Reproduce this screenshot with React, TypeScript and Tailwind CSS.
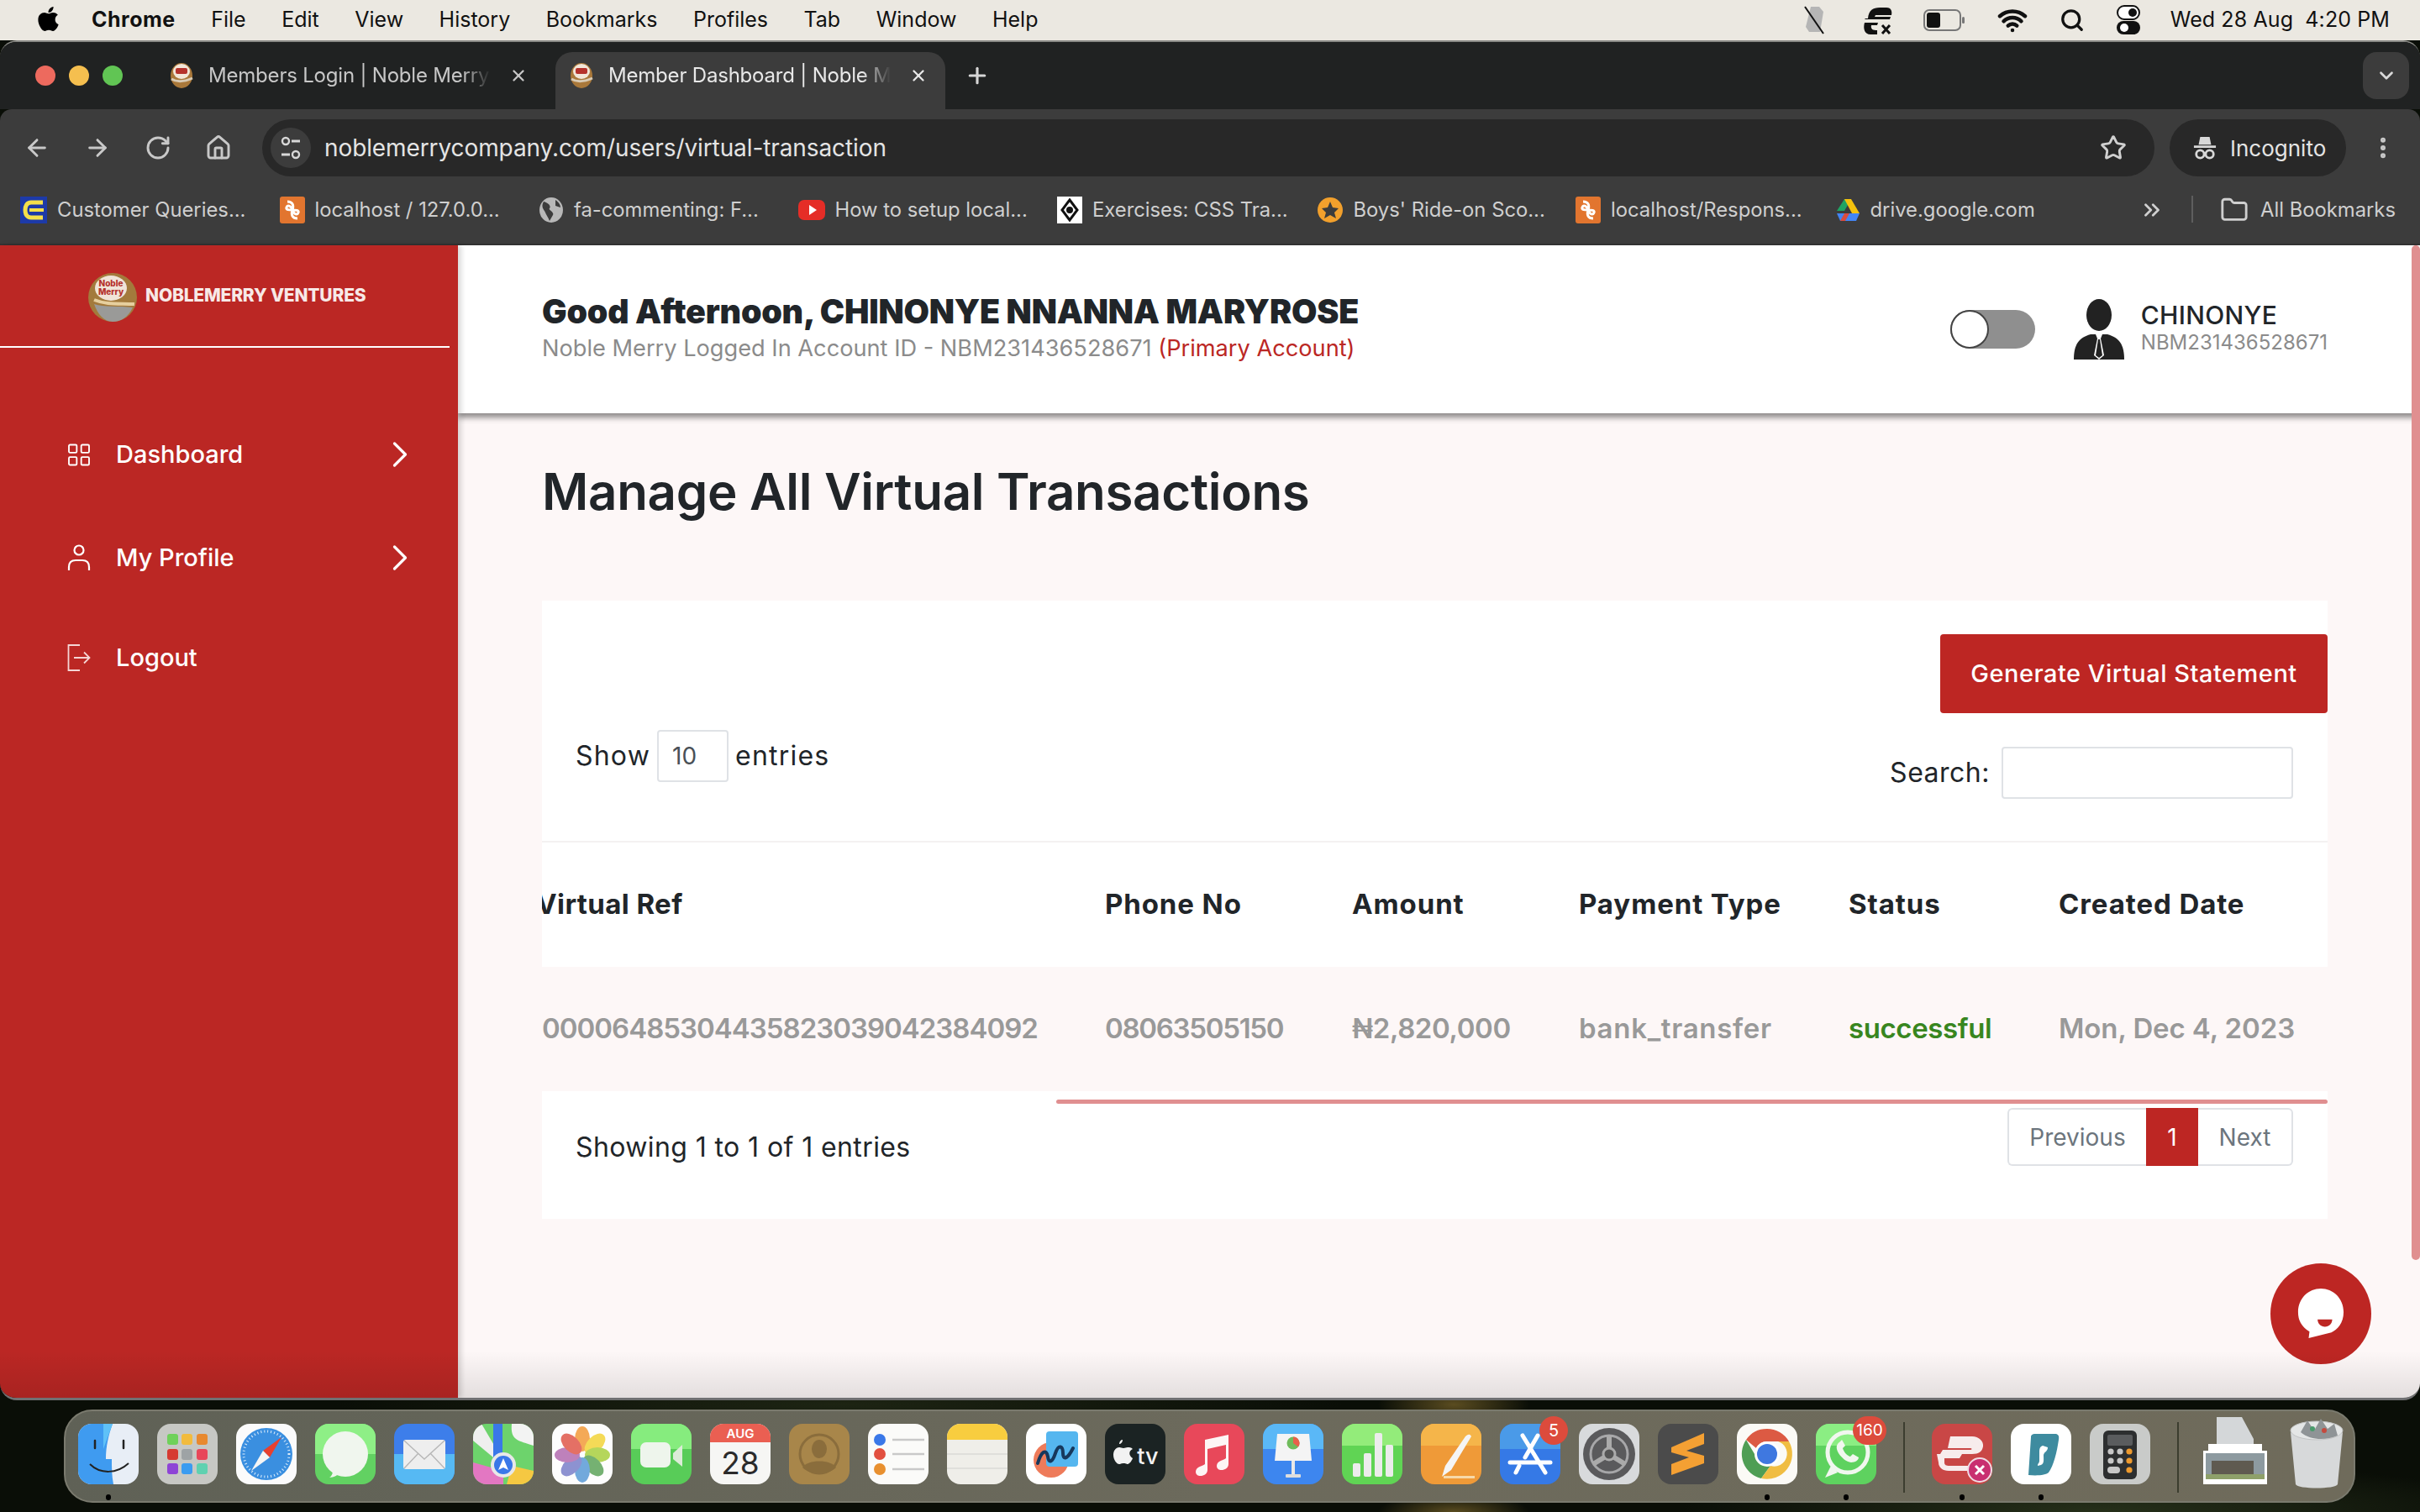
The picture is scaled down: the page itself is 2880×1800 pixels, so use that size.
import { ReactNode, useId } from 'react';
import { FaApple } from 'react-icons/fa';
import {
  ArrowLeft,
  ArrowRight,
  RotateCw,
  Home,
  Star,
  X,
  Plus,
  ChevronDown,
  ChevronRight,
  ChevronsRight,
  EllipsisVertical,
  Folder,
  LayoutGrid,
  Search,
  Wifi,
} from 'lucide-react';

const ui = "font-['Inter',sans-serif]";

const menuItems = ['File', 'Edit', 'View', 'History', 'Bookmarks', 'Profiles', 'Tab', 'Window', 'Help'];

function MenuBar() {
  return (
    <div className="h-[48px] bg-[#ebe8e1] flex items-center justify-between pl-[42px] pr-[36px] text-[25px] text-[#111]">
      <div className="flex items-center gap-[42.5px]">
        <div className="flex items-center gap-[36px]">
          <FaApple className="w-[31px] h-[33px] text-black -mt-[3px]" />
          <span className="font-bold tracking-[0.5px]">Chrome</span>
        </div>
        {menuItems.map((m) => (
          <span key={m}>{m}</span>
        ))}
      </div>
      <div className="flex items-center">
        <svg viewBox="0 0 28 36" className="w-[28px] h-[36px] mr-[44px]">
          <path d="M10 2h10l5 6-4 24H8L4 26z" fill="#b5b5b5" />
          <path d="M3 2l22 32" stroke="#111" strokeWidth="2" />
        </svg>
        <svg viewBox="0 0 36 36" className="w-[36px] h-[36px] mr-[36px]">
          <path d="M6 16C7 6 12 3 20 3h8c6 0 7 5 6 9H15l-1 2h19l-1 3H2l1-1zM2 21h16l-1 3H10c-1 5 2 6 7 6v5H9C2 35 0 28 2 21z" fill="#111" />
          <path d="M23 24l9 10M32 24l-9 10" stroke="#111" strokeWidth="3" />
        </svg>
        <svg viewBox="0 0 50 26" className="w-[50px] h-[26px] mr-[38px]">
          <rect x="1" y="1" width="43" height="24" rx="6" fill="none" stroke="#777" strokeWidth="2" />
          <rect x="4" y="4" width="16" height="18" rx="3" fill="#111" />
          <rect x="46" y="9" width="3" height="8" rx="1.5" fill="#777" />
        </svg>
        <Wifi className="w-[36px] h-[36px] mr-[38px] text-[#111]" strokeWidth={3} />
        <Search className="w-[30px] h-[32px] mr-[38px] text-[#111]" strokeWidth={2.6} />
        <svg viewBox="0 0 28 36" className="w-[28px] h-[36px] mr-[36px]">
          <rect x="1" y="1" width="26" height="16" rx="8" fill="#fff" stroke="#111" strokeWidth="2" />
          <circle cx="19" cy="9" r="5" fill="#111" />
          <rect x="0" y="19" width="28" height="16" rx="8" fill="#111" />
          <circle cx="9" cy="27" r="5" fill="#fff" />
        </svg>
        <span className="whitespace-pre tracking-[0.1px]">Wed 28 Aug  4:20 PM</span>
      </div>
    </div>
  );
}

function NobleFavicon() {
  return (
    <svg viewBox="0 0 28 32" className="w-[28px] h-[32px] shrink-0">
      <ellipse cx="14" cy="16" rx="13" ry="15" fill="#a9783a" />
      <ellipse cx="14" cy="11" rx="10" ry="9" fill="#f2e6d8" />
      <rect x="7" y="7" width="14" height="7" rx="2" fill="#b5322c" />
      <path d="M2 20c5 3 14 4 25-1" stroke="#d9cbb5" strokeWidth="3" fill="none" />
    </svg>
  );
}

function Tab({ title, active }: { title: string; active?: boolean }) {
  return (
    <div
      className={`flex items-center h-[68px] rounded-t-[20px] pl-[17px] pb-[12px] ${
        active ? 'w-[464px] bg-[#3c3c3c] text-[#e8e8e8]' : 'w-[476px] text-[#c7c7c7]'
      }`}
    >
      <NobleFavicon />
      <span className="ml-[18px] w-[336px] text-[24px] tracking-[-0.2px] whitespace-nowrap overflow-hidden [mask-image:linear-gradient(to_right,black_90%,transparent)]">
        {title}
      </span>
      <X className="ml-[22px] w-[22px] h-[22px]" strokeWidth={2.5} />
    </div>
  );
}

function TabStrip() {
  return (
    <div className="h-[80px] bg-[#202222] flex items-end relative">
      <div className="flex items-center gap-[16px] pl-[42px] pr-[39px] h-[80px]">
        <span className="w-[24px] h-[24px] rounded-full bg-[#ed6a5e]" />
        <span className="w-[24px] h-[24px] rounded-full bg-[#f5bf4f]" />
        <span className="w-[24px] h-[24px] rounded-full bg-[#61c554]" />
      </div>
      <Tab title="Members Login | Noble Merry" />
      <Tab title="Member Dashboard | Noble M" active />
      <Plus className="ml-[23px] mb-[25px] w-[30px] h-[30px] text-[#d6d6d6]" strokeWidth={2.5} />
      <div className="absolute right-[13px] top-[12px] w-[55px] h-[56px] bg-[#3c3c3c] rounded-[16px] flex items-center justify-center">
        <ChevronDown className="w-[26px] h-[26px] text-[#d8d8d8]" strokeWidth={2.5} />
      </div>
    </div>
  );
}

function Toolbar() {
  const icon = 'w-[32px] h-[32px] text-[#c8c8c8]';
  return (
    <div className="h-[80px] bg-[#3c3c3c] flex items-center pl-[28px] rounded-t-[14px] pt-[12px]">
      <div className="flex items-center gap-[40px] mr-[36px]">
        <ArrowLeft className={icon} strokeWidth={2.2} />
        <ArrowRight className={icon} strokeWidth={2.2} />
        <RotateCw className={icon} strokeWidth={2.2} />
        <Home className={icon} strokeWidth={2.2} />
      </div>
      <div className="w-[2252px] h-[68px] rounded-full bg-[#282828] flex items-center pl-[10px] pr-[33px]">
        <div className="w-[48px] h-[48px] rounded-full bg-[#3c3c3c] flex items-center justify-center">
          <svg viewBox="0 0 26 34" className="w-[26px] h-[34px]">
            <circle cx="7" cy="9" r="4" fill="none" stroke="#d8d8d8" strokeWidth="2.4" />
            <path d="M14 9h10M2 25h10" stroke="#d8d8d8" strokeWidth="2.8" />
            <circle cx="19" cy="25" r="4" fill="none" stroke="#d8d8d8" strokeWidth="2.4" />
          </svg>
        </div>
        <span className="ml-[16px] text-[28px] text-[#e4e4e4] tracking-[-0.1px]">noblemerrycompany.com/users/virtual-transaction</span>
        <Star className="ml-auto w-[32px] h-[32px] text-[#d0d0d0]" strokeWidth={2.2} />
      </div>
      <div className="ml-[18px] w-[210px] h-[68px] rounded-full bg-[#282828] flex items-center pl-[28px] gap-[16px] text-[26px] text-[#e4e4e4]">
        <svg viewBox="0 0 30 32" className="w-[28px] h-[32px]">
          <path d="M9 2h12l2 10H7z M1 13h28v3H1z" fill="#d8d8d8" />
          <circle cx="9" cy="24" r="5" fill="none" stroke="#d8d8d8" strokeWidth="3" />
          <circle cx="21" cy="24" r="5" fill="none" stroke="#d8d8d8" strokeWidth="3" />
        </svg>
        <span>Incognito</span>
      </div>
      <EllipsisVertical className="ml-[28px] w-[32px] h-[32px] text-[#c8c8c8]" strokeWidth={2.5} />
    </div>
  );
}

function XamppIcon() {
  return (
    <svg viewBox="0 0 30 32" className="w-[30px] h-[32px] shrink-0">
      <rect width="30" height="32" rx="3" fill="#e2752f" />
      <path d="M9 6c6 0 8 4 6 10-2-6-6-6-7-3s3 3 7 3c4 0 8 0 7 3s-5 3-7-3c-2 6 0 10 6 10" stroke="#fff" strokeWidth="3" fill="none" />
    </svg>
  );
}

const bookmarks: { label: string; icon: ReactNode }[] = [
  {
    label: 'Customer Queries...',
    icon: (
      <svg viewBox="0 0 32 32" className="w-[32px] h-[32px] shrink-0">
        <rect width="32" height="32" fill="#1d3aa8" />
        <path d="M27 7H13C8 7 6 11 6 16s2 9 7 9h14" stroke="#f5e04a" strokeWidth="5" fill="none" />
        <rect x="11" y="14" width="17" height="4" fill="#f5e04a" />
      </svg>
    ),
  },
  { label: 'localhost / 127.0.0...', icon: <XamppIcon /> },
  {
    label: 'fa-commenting: F...',
    icon: (
      <svg viewBox="0 0 30 32" className="w-[30px] h-[32px] shrink-0">
        <ellipse cx="15" cy="16" rx="14" ry="15" fill="#b8b8b8" />
        <path d="M6 6c6 2 9 5 7 8-2 2 6 4 4 8l-4 7c-2-5-4-7-5-10S2 13 6 6zM20 4c3 2 6 5 6 9l-6-2z" fill="#3c3c3c" />
      </svg>
    ),
  },
  {
    label: 'How to setup local...',
    icon: (
      <svg viewBox="0 0 32 32" className="w-[32px] h-[32px] shrink-0">
        <rect y="4" width="32" height="24" rx="7" fill="#e52d27" />
        <path d="M13 10l9 6-9 6z" fill="#fff" />
      </svg>
    ),
  },
  {
    label: 'Exercises: CSS Tra...',
    icon: (
      <svg viewBox="0 0 30 32" className="w-[30px] h-[32px] shrink-0">
        <rect width="30" height="32" fill="#fff" />
        <path d="M15 4l9 12-9 12-9-12z" fill="none" stroke="#111" strokeWidth="3" />
        <circle cx="15" cy="16" r="4" fill="#111" />
      </svg>
    ),
  },
  {
    label: "Boys' Ride-on Sco...",
    icon: (
      <svg viewBox="0 0 32 32" className="w-[32px] h-[32px] shrink-0">
        <circle cx="16" cy="16" r="15" fill="#f2a02c" />
        <path d="M16 6l3 7 7 1-5 5 2 7-7-4-7 4 2-7-5-5 7-1z" fill="#3c3c3c" />
      </svg>
    ),
  },
  { label: 'localhost/Respons...', icon: <XamppIcon /> },
  {
    label: 'drive.google.com',
    icon: (
      <svg viewBox="0 0 30 30" className="w-[30px] h-[30px] shrink-0">
        <path d="M11 2h8l-8 14H2z" fill="#1fa463" />
        <path d="M11 2h8l10 17h-9z" fill="#f4c20d" />
        <path d="M7 19h22l-4 9H6l-4-9z" fill="#4285f4" />
        <path d="M6 28l5-9h6l-5 9z" fill="#d94b3d" />
      </svg>
    ),
  },
];

function BookmarksBar() {
  return (
    <div className="h-[82px] bg-[#3c3c3c] flex items-start pt-[23px] pl-[24px] text-[23.8px] text-[#cfcfcf] border-b-[2px] border-[#333]">
      {bookmarks.map((b) => (
        <div key={b.label} className="w-[308.5px] h-[34px] flex items-center gap-[12px] whitespace-nowrap">
          {b.icon}
          <span>{b.label}</span>
        </div>
      ))}
      <ChevronsRight className="ml-[54px] mt-[2px] w-[30px] h-[30px] text-[#cfcfcf]" strokeWidth={2.2} />
      <div className="ml-[32px] w-[2px] h-[32px] bg-[#5e5e5e]" />
      <Folder className="ml-[32px] w-[34px] h-[34px] text-[#cfcfcf]" strokeWidth={2} />
      <span className="ml-[14px] leading-[34px] whitespace-nowrap">All Bookmarks</span>
    </div>
  );
}

function NavItem({ icon, label, arrow, className }: { icon: ReactNode; label: string; arrow?: boolean; className?: string }) {
  return (
    <div className={`flex items-center h-[44px] pl-[78px] pr-[43px] text-[29px] font-medium text-white ${className ?? ''}`}>
      <span className="w-[32px] flex justify-center">{icon}</span>
      <span className="ml-[28px]">{label}</span>
      {arrow && <ChevronRight className="ml-auto w-[52px] h-[52px] -my-[4px]" strokeWidth={1.5} />}
    </div>
  );
}

function Sidebar() {
  return (
    <aside className="w-[545px] shrink-0 bg-[#bb2724] flex flex-col shadow-[4px_0_6px_rgba(0,0,0,0.15)] z-10">
      <div className="w-[535px] h-[122px] border-b-[2px] border-white flex items-start pt-[32px] pl-[104px]">
        <svg viewBox="0 0 60 60" className="w-[60px] h-[60px]">
          <ellipse cx="30" cy="30" rx="29" ry="29" fill="#a37a3c" />
          <ellipse cx="28" cy="19" rx="19" ry="15" fill="#f0e4d8" />
          <text x="28" y="17" textAnchor="middle" fontSize="10" fontWeight="800" fill="#b5322c" fontFamily="Inter, sans-serif">Noble</text>
          <text x="28" y="27" textAnchor="middle" fontSize="10" fontWeight="800" fill="#b5322c" fontFamily="Inter, sans-serif">Merry</text>
          <path d="M8 38c12 4 30 2 46 4-6 12-14 17-24 17-10 0-18-9-22-21z" fill="#9a9a98" />
          <path d="M8 33c15 6 30 4 48 5" stroke="#e6cf9e" strokeWidth="4" fill="none" />
        </svg>
        <span className="ml-[9px] mt-[12px] text-[21px] font-extrabold text-[#f7e9e7] whitespace-nowrap tracking-[-0.2px]">NOBLEMERRY VENTURES</span>
      </div>
      <NavItem
        className="mt-[105px]"
        icon={<LayoutGrid className="w-[37px] h-[37px]" strokeWidth={1.4} />}
        label="Dashboard"
        arrow
      />
      <NavItem
        className="mt-[79px]"
        icon={
          <svg viewBox="0 0 28 32" className="w-[28px] h-[32px]" fill="none" stroke="#fff" strokeWidth="2.2">
            <circle cx="14" cy="7" r="5.5" />
            <path d="M2 31v-4c0-5 3-8 8-8h8c5 0 8 3 8 8v4" />
          </svg>
        }
        label="My Profile"
        arrow
      />
      <NavItem
        className="mt-[75px]"
        icon={
          <svg viewBox="0 0 28 34" className="w-[28px] h-[34px]" fill="none" stroke="#f5d5d4" strokeWidth="1.8">
            <path d="M15 2H1.5v30H15" />
            <path d="M8 17h18M20 10.5l6.5 6.5-6.5 6.5" />
          </svg>
        }
        label="Logout"
      />
    </aside>
  );
}

function TopHeader() {
  return (
    <header className="h-[200px] bg-white flex items-center pl-[100px] pr-[110px] shadow-[0_5px_7px_rgba(0,0,0,0.45)] relative shrink-0">
      <div className="flex flex-col gap-[5px] -mt-[5px]">
        <h1 className="text-[39.3px] leading-[46px] font-black text-[#212529] tracking-[-0.2px] whitespace-nowrap">Good Afternoon, CHINONYE NNANNA MARYROSE</h1>
        <p className="text-[27.2px] leading-[32px] text-[#8b8b8b] whitespace-nowrap">
          Noble Merry Logged In Account ID - NBM231436528671 <span className="text-[#bb2724]">(Primary Account)</span>
        </p>
      </div>
      <div className="ml-auto w-[101px] h-[46px] rounded-full bg-[#8f8f8f] flex items-center">
        <span className="w-[46px] h-[46px] rounded-full bg-white border-[2px] border-[#444]" />
      </div>
      <svg viewBox="0 0 60 72" className="ml-[46px] w-[60px] h-[72px] shrink-0">
        <ellipse cx="30" cy="19" rx="15" ry="19" fill="#222" />
        <path d="M0 72c0-18 6-26 20-30h20c14 4 20 12 20 30z" fill="#222" />
        <path d="M26 42h8l-2 5 4 20-6 5-6-5 4-20z" fill="#fff" />
        <path d="M29 48h2l3 19-4 3-4-3z" fill="#222" />
      </svg>
      <div className="ml-[20px] flex flex-col -mt-[4px]">
        <span className="text-[30px] leading-[36px] font-medium text-[#212529] tracking-[0.3px]">CHINONYE</span>
        <span className="text-[24px] leading-[30px] text-[#8b8b8b] whitespace-nowrap">NBM231436528671</span>
      </div>
    </header>
  );
}

const columns = [
  { title: 'Virtual Ref', value: '00006485304435823039042384092', w: 'w-[670px]', td: 'tracking-[-1px] text-[#999]' },
  { title: 'Phone No', value: '08063505150', w: 'w-[294px]', td: 'tracking-[-1.3px] text-[#999]' },
  { title: 'Amount', value: '₦2,820,000', w: 'w-[270px]', td: 'tracking-[-0.4px] text-[#999]' },
  { title: 'Payment Type', value: 'bank_transfer', w: 'w-[321px]', td: 'tracking-[0.7px] text-[#999]' },
  { title: 'Status', value: 'successful', w: 'w-[250px]', td: 'tracking-[-0.4px] text-[#38861f]' },
  { title: 'Created Date', value: 'Mon, Dec 4, 2023', w: 'w-[320px]', td: 'tracking-[-0.1px] text-[#999]' },
];

function Card() {
  return (
    <section className="mt-[94px] bg-white text-[32px] text-[#212529]">
      <div className="pt-[40px] flex justify-end">
        <button className="w-[461px] h-[94px] rounded-[4px] bg-[#bd2623] text-white text-[29px] font-medium tracking-[0.5px]">Generate Virtual Statement</button>
      </div>
      <div className="mt-[20px] pl-[40px] pr-[41px] pb-[50px] flex justify-between items-start">
        <div className="flex items-center gap-[8px] tracking-[1.2px]">
          <span>Show</span>
          <div className="w-[85px] h-[62px] border-[2px] border-[#dfe2e6] rounded-[4px] flex items-center pl-[16px] text-[28px] text-[#495057] tracking-normal">10</div>
          <span>entries</span>
        </div>
        <div className="mt-[20px] flex items-center gap-[14px] tracking-[0.5px]">
          <span>Search:</span>
          <div className="w-[347px] h-[62px] border-[2px] border-[#dfe2e6] rounded-[4px]" />
        </div>
      </div>
      <div className="overflow-hidden border-t-[2px] border-[#f4f1f1]">
        <table className="table-fixed w-[2125px] text-left">
          <thead>
            <tr className="h-[148px] text-[33px] text-[#212529]">
              {columns.map((c, i) => (
                <th key={c.title} className={`${c.w} font-bold whitespace-nowrap ${i === 0 ? '-indent-[7px] tracking-[0.4px]' : 'tracking-[0.9px]'}`}>
                  {c.title}
                </th>
              ))}
            </tr>
          </thead>
          <tbody>
            <tr className="h-[148px] bg-[#fdf7f7] text-[33px] font-semibold">
              {columns.map((c) => (
                <td key={c.title} className={`whitespace-nowrap ${c.td}`}>
                  {c.value}
                </td>
              ))}
            </tr>
          </tbody>
        </table>
      </div>
      <div className="h-[152px] pt-[10px] flex flex-col">
        <div className="self-end w-[1513px] h-[5px] rounded-full bg-[#e08f90]" />
        <div className="mt-[5px] pl-[40px] pr-[41px] flex justify-between items-start">
          <span className="mt-[27px] leading-[40px] tracking-[0.4px]">Showing 1 to 1 of 1 entries</span>
          <div className="flex h-[69px] text-[28px] text-[#6c757d]">
            <span className="w-[165px] border-[2px] border-r-0 border-[#dfe2e6] rounded-l-[6px] flex items-center justify-center">Previous</span>
            <span className="w-[62px] bg-[#bd2623] text-white flex items-center justify-center">1</span>
            <span className="w-[113px] border-[2px] border-l-0 border-[#dfe2e6] rounded-r-[6px] flex items-center justify-center">Next</span>
          </div>
        </div>
      </div>
    </section>
  );
}

function Squircle({ children, bg }: { children?: ReactNode; bg: string }) {
  const id = useId();
  return (
    <svg viewBox="0 0 72 72" className="w-[72px] h-[72px] block">
      <defs>
        <clipPath id={id}>
          <rect width="72" height="72" rx="16" />
        </clipPath>
      </defs>
      <g clipPath={`url(#${id})`}>
        <rect width="72" height="72" fill={bg} />
        {children}
      </g>
    </svg>
  );
}

const dockLeft: { key: string; bg: string; art: ReactNode; dot?: boolean; badge?: string }[] = [
  {
    key: 'finder',
    bg: '#e8eef6',
    dot: true,
    art: (
      <>
        <path d="M0 0h41c-5 14-8 27-8 42h7c0 11 0 20 2 30H0z" fill="#3f9bf0" />
        <path d="M0 0h41L30 30V0z" fill="#5fc1f8" />
        <path d="M20 20v9M54 20v9" stroke="#222" strokeWidth="2.5" strokeLinecap="round" />
        <path d="M14 48c12 12 32 12 46-1" stroke="#222" strokeWidth="2" fill="none" />
      </>
    ),
  },
  {
    key: 'launchpad',
    bg: '#c7c8c4',
    art: (
      <>
        <rect x="12" y="12" width="13" height="13" rx="3" fill="#6fd15a" />
        <rect x="29" y="12" width="13" height="13" rx="3" fill="#f2bb3d" />
        <rect x="47" y="12" width="13" height="13" rx="3" fill="#e8892f" />
        <rect x="12" y="30" width="13" height="13" rx="3" fill="#d63a32" />
        <rect x="29" y="30" width="13" height="13" rx="3" fill="#9ea3a5" />
        <rect x="47" y="30" width="13" height="13" rx="3" fill="#e8475a" />
        <rect x="12" y="47" width="13" height="13" rx="3" fill="#8e44d6" />
        <rect x="29" y="47" width="13" height="13" rx="3" fill="#3b9cf0" />
        <rect x="47" y="47" width="13" height="13" rx="3" fill="#5fd1b0" />
      </>
    ),
  },
  {
    key: 'safari',
    bg: '#fbfbfb',
    art: (
      <>
        <circle cx="36" cy="36" r="31" fill="#3a8fe0" />
        <circle cx="36" cy="36" r="27" fill="none" stroke="#dfeefb" strokeWidth="3" strokeDasharray="1 3" />
        <path d="M54 16L40 40 32 32z" fill="#e8402f" />
        <path d="M18 56l14-24 8 8z" fill="#f5f5f5" />
      </>
    ),
  },
  {
    key: 'messages',
    bg: '#62d162',
    art: (
      <>
        <rect width="72" height="36" fill="#8eef86" />
        <ellipse cx="36" cy="36" rx="27" ry="27" fill="#f0f6ee" />
        <path d="M20 54c2 4 0 8-3 10 5 0 10-3 13-6z" fill="#f0f6ee" />
      </>
    ),
  },
  {
    key: 'mail',
    bg: '#3d7eea',
    art: (
      <>
        <rect y="36" width="72" height="36" fill="#56b9f3" />
        <rect x="11" y="19" width="50" height="35" rx="3" fill="#eeeeee" />
        <path d="M12 20l24 22 24-22M12 53l17-18M60 53L43 35" stroke="#b7b7b7" strokeWidth="1.4" fill="none" />
      </>
    ),
  },
  {
    key: 'maps',
    bg: '#6dd36c',
    art: (
      <>
        <path d="M46 0c-2 20 8 20 26 26V0z" fill="#f3f3f3" />
        <path d="M0 46l36 10 0 16H0z" fill="#e377c2" />
        <path d="M40 72l6-22 26 6v16z" fill="#f5c842" />
        <path d="M0 0h10l26 44 0 6L0 20z" fill="#efefef" />
        <rect x="24" y="0" width="11" height="44" fill="#3a78e8" />
        <circle cx="36" cy="49" r="15" fill="#e8e8e8" />
        <circle cx="36" cy="49" r="11" fill="#3a78e8" />
        <path d="M36 41l6 14-6-3-6 3z" fill="#fff" />
      </>
    ),
  },
  {
    key: 'photos',
    bg: '#fdfdfd',
    art: (
      <g opacity="0.85">
        <ellipse cx="36" cy="18" rx="9" ry="15" fill="#f39a3a" />
        <ellipse cx="51" cy="24" rx="9" ry="15" fill="#f2d43a" transform="rotate(45 51 24)" />
        <ellipse cx="54" cy="37" rx="15" ry="9" fill="#a9cf3f" />
        <ellipse cx="49" cy="50" rx="9" ry="15" fill="#5da45a" transform="rotate(-45 49 50)" />
        <ellipse cx="36" cy="55" rx="9" ry="15" fill="#5a9ad6" />
        <ellipse cx="23" cy="50" rx="9" ry="15" fill="#7a7fc9" transform="rotate(45 23 50)" />
        <ellipse cx="18" cy="37" rx="15" ry="9" fill="#b36bb0" />
        <ellipse cx="23" cy="24" rx="9" ry="15" fill="#e0574a" transform="rotate(-45 23 24)" />
      </g>
    ),
  },
  {
    key: 'facetime',
    bg: '#58cc58',
    art: (
      <>
        <rect width="72" height="30" fill="#86ec7e" />
        <rect x="11" y="22" width="36" height="30" rx="7" fill="#eef5ec" />
        <path d="M50 35l11-10v26L50 42z" fill="#dcebd8" />
      </>
    ),
  },
  {
    key: 'calendar',
    bg: '#f6f6f4',
    art: (
      <>
        <rect width="72" height="22" fill="#ea5f52" />
        <text x="36" y="17" textAnchor="middle" fontSize="15" fontWeight="600" fill="#fff" fontFamily="Inter, sans-serif">AUG</text>
        <text x="36" y="60" textAnchor="middle" fontSize="37" fill="#2b2b2b" fontFamily="Inter, sans-serif">28</text>
      </>
    ),
  },
  {
    key: 'contacts',
    bg: '#a8864a',
    art: (
      <>
        <circle cx="36" cy="36" r="23" fill="none" stroke="#8a6d3c" strokeWidth="3" />
        <ellipse cx="36" cy="30" rx="9" ry="11" fill="#8a6d3c" />
        <path d="M16 52c6-10 34-10 40 0-10 10-30 10-40 0z" fill="#8a6d3c" />
      </>
    ),
  },
  {
    key: 'reminders',
    bg: '#fbfbf9',
    art: (
      <>
        <circle cx="14" cy="19" r="7" fill="#3a78e8" />
        <circle cx="14" cy="36" r="7" fill="#e2503f" />
        <circle cx="14" cy="54" r="7" fill="#e8902f" />
        <path d="M29 19h38M29 36h38M29 54h38" stroke="#c9c9c9" strokeWidth="2.4" />
      </>
    ),
  },
  {
    key: 'notes',
    bg: '#efeee9',
    art: (
      <>
        <rect width="72" height="19" fill="#f8cd3f" />
        <path d="M0 36h72M0 53h72" stroke="#dadad6" strokeWidth="1.6" />
      </>
    ),
  },
  {
    key: 'freeform',
    bg: '#ffffff',
    art: (
      <>
        <circle cx="30" cy="43" r="21" fill="#ee7b5a" />
        <rect x="24" y="9" width="38" height="42" rx="4" fill="#55b6ef" />
        <path d="M14 47c4-14 10-18 12-8 1 8 5 8 9-4s9-8 9 0 5 8 12-6" stroke="#17385c" strokeWidth="4" fill="none" strokeLinecap="round" />
      </>
    ),
  },
  {
    key: 'tv',
    bg: '#1b2323',
    art: (
      <>
        <path d="M18 24c2-1 3-3 3-5-2 0-4 2-4 5zM22 29c-2 0-3-1-5-1-3 0-7 3-7 9s4 11 7 11c2 0 2-1 5-1s3 1 5 1c2 0 5-4 6-7-5-3-5-9 0-11-2-2-4-2-6-2-2 0-3 1-5 1z" fill="#f2f2f2" />
        <text x="51" y="48" textAnchor="middle" fontSize="27" fontWeight="500" fill="#f2f2f2" fontFamily="Inter, sans-serif">tv</text>
      </>
    ),
  },
  {
    key: 'music',
    bg: '#e8485a',
    art: (
      <path d="M53 13v35c0 8-14 10-14 2 0-6 9-7 11-9V25l-22 5v25c0 8-14 10-14 2 0-6 9-7 11-9V19z" fill="#fdf5f5" />
    ),
  },
  {
    key: 'keynote',
    bg: '#3d86ef',
    art: (
      <>
        <rect width="72" height="30" fill="#5ab8f7" />
        <path d="M17 12h38l3 32H14z" fill="#f4f4f4" />
        <circle cx="36" cy="23" r="7.5" fill="#6fbb5b" />
        <path d="M36 23V15.5a7.5 7.5 0 0 1 6 12z" fill="#e85f4a" />
        <rect x="34" y="44" width="4" height="18" fill="#e8e8e8" />
        <rect x="27" y="60" width="18" height="4" rx="1" fill="#ddd" />
      </>
    ),
  },
  {
    key: 'numbers',
    bg: '#60d454',
    art: (
      <>
        <rect width="72" height="26" fill="#93ec7a" />
        <rect x="13" y="47" width="9" height="16" rx="2" fill="#ececec" />
        <rect x="26" y="35" width="9" height="28" rx="2" fill="#ececec" />
        <rect x="39" y="11" width="9" height="52" rx="2" fill="#ececec" />
        <rect x="52" y="25" width="9" height="38" rx="2" fill="#ececec" />
      </>
    ),
  },
  {
    key: 'pages',
    bg: '#ef9a38',
    art: (
      <>
        <rect width="72" height="26" fill="#f5b54a" />
        <path d="M60 15c-2-4-5-2-7 0L29 50l-4 13 11-8z" fill="#f5f5f5" />
        <rect x="27" y="62" width="37" height="3" fill="#f7d9a9" />
      </>
    ),
  },
  {
    key: 'appstore',
    bg: '#3579e6',
    badge: '5',
    art: (
      <>
        <rect width="72" height="30" fill="#4a9ae8" />
        <path d="M27 14l27 44M45 14L30 40M23 50l-4 8" stroke="#fff" strokeWidth="5" strokeLinecap="round" />
        <path d="M12 46h48" stroke="#fff" strokeWidth="5" strokeLinecap="round" />
      </>
    ),
  },
  {
    key: 'settings',
    bg: '#d8dadc',
    art: (
      <>
        <circle cx="36" cy="36" r="31" fill="#5a5a5c" />
        <circle cx="36" cy="36" r="22" fill="none" stroke="#a7a7a9" strokeWidth="3" />
        <circle cx="36" cy="36" r="7" fill="#555" stroke="#aaa" strokeWidth="3" />
        <path d="M36 29V14M30 40L17 48M42 40l13 8" stroke="#aaa" strokeWidth="6" />
      </>
    ),
  },
  {
    key: 'sublime',
    bg: '#4b4b4b',
    art: <path d="M55 11v13L34 32l21 6v9L16 61V48l21-8-21-6v-6z" fill="#f4a033" />,
  },
  {
    key: 'chrome',
    bg: '#fbfaf6',
    dot: true,
    art: (
      <>
        <path d="M36 6a30 30 0 0 1 26 15H36a15 15 0 0 0-13 8L11 19A30 30 0 0 1 36 6z" fill="#dc5a43" />
        <path d="M11 19l13 22a15 15 0 0 0 16 9L29 65A30 30 0 0 1 11 19z" fill="#4f9e55" />
        <path d="M62 21a30 30 0 0 1-33 44l11-15a15 15 0 0 0 9-29z" fill="#f0bd42" />
        <circle cx="36" cy="36" r="15" fill="#fff" />
        <circle cx="36" cy="36" r="12" fill="#3f78e0" />
      </>
    ),
  },
  {
    key: 'whatsapp',
    bg: '#5ed25f',
    dot: true,
    badge: '160',
    art: (
      <>
        <rect width="72" height="26" fill="#8bee83" />
        <circle cx="38" cy="34" r="24" fill="none" stroke="#f1f7ef" strokeWidth="5" />
        <path d="M18 50l-7 14 15-6z" fill="#f1f7ef" />
        <path d="M28 22c-3 2-5 6-1 13 4 6 9 10 15 11 5 0 9-3 9-6l-7-4-3 3c-4-1-8-6-9-10l3-3-4-7z" fill="#f1f7ef" />
      </>
    ),
  },
];

const dockRight: typeof dockLeft = [
  {
    key: 'expressvpn',
    bg: '#c94746',
    dot: true,
    art: (
      <>
        <path d="M22 15h26c8 0 14 6 13 12s-5 9-13 9H10l3-5h33c2 0 2-2 0-2H19z" fill="#f7ecec" />
        <path d="M6 36h30l-3 5H15v5c0 3 2 4 6 4h25v6H20c-7 0-12-4-12-10z" fill="#f7ecec" />
        <circle cx="57" cy="55" r="14" fill="#c92f70" stroke="#f0dbe4" strokeWidth="2" />
        <path d="M52 50l10 10M62 50L52 60" stroke="#fff" strokeWidth="3" />
      </>
    ),
  },
  {
    key: 'surfshark',
    bg: '#ffffff',
    dot: true,
    art: (
      <path d="M24 16c0-3 2-4 5-4h24c3 0 5 2 4 7-2 14-6 31-12 39-3 3-13 4-24 3zM38 26c-3 1-4 3-4 8v10c0 3-2 3-2 6l4-1c4-2 3-6 3-12 1-4 5-4 5-9z" fill="#3e8b9f" fillRule="evenodd" />
    ),
  },
  {
    key: 'calculator',
    bg: '#c9cbc9',
    art: (
      <>
        <rect x="16" y="8" width="40" height="58" rx="6" fill="#2d2f30" />
        <rect x="21" y="13" width="30" height="13" rx="2" fill="#5a5c5e" />
        <circle cx="25" cy="33" r="3.6" fill="#c7c7c7" />
        <circle cx="36" cy="33" r="3.6" fill="#c7c7c7" />
        <circle cx="47" cy="33" r="3.6" fill="#ee9a2e" />
        <circle cx="25" cy="44" r="3.6" fill="#c7c7c7" />
        <circle cx="36" cy="44" r="3.6" fill="#c7c7c7" />
        <circle cx="47" cy="44" r="3.6" fill="#ee9a2e" />
        <rect x="21" y="51" width="15" height="8" rx="4" fill="#c7c7c7" />
        <circle cx="47" cy="55" r="3.6" fill="#ee9a2e" />
      </>
    ),
  },
];

function DockIcon({ item }: { item: (typeof dockLeft)[number] }) {
  return (
    <div className="relative w-[72px] h-[72px] shrink-0">
      <Squircle bg={item.bg}>{item.art}</Squircle>
      {item.badge && (
        <span
          className={`absolute -top-[9px] h-[34px] rounded-full bg-[#dc4b3c] text-white flex items-center justify-center ${
            item.badge.length > 1 ? '-right-[12px] w-[40px] text-[19px]' : '-right-[9px] w-[34px] text-[20px]'
          }`}
        >
          {item.badge}
        </span>
      )}
      {item.dot && <span className="absolute left-[33px] top-[84px] w-[6px] h-[7px] rounded-full bg-black" />}
    </div>
  );
}

function Dock() {
  return (
    <div className="mt-[11px] ml-[76px] w-[2727px] h-[111px] rounded-[34px] bg-gradient-to-r from-[#5f6156] via-[#6c6a5c] to-[#6f6b5b] border-[2px] border-[#7a7a6e] flex items-start pt-[15px] pl-[15px] gap-[22px]">
      {dockLeft.map((d) => (
        <DockIcon key={d.key} item={d} />
      ))}
      <div className="ml-[10px] w-[2px] h-[84px] -mt-[2px] bg-[#3c3d2f]" />
      <div className="ml-[10px] flex gap-[22px]">
        {dockRight.map((d) => (
          <DockIcon key={d.key} item={d} />
        ))}
      </div>
      <div className="ml-[10px] w-[2px] h-[84px] -mt-[2px] bg-[#3c3d2f]" />
      <svg viewBox="0 0 76 80" className="ml-[7px] -mt-[8px] w-[76px] h-[80px] shrink-0">
        <path d="M16 0h30l14 26v8H16z" fill="#d4d7d9" />
        <rect x="6" y="32" width="64" height="12" fill="#fff" />
        <rect x="0" y="40" width="76" height="40" fill="#fff" />
        <rect x="3" y="43" width="70" height="30" fill="#8d9aa0" />
        <rect x="10" y="52" width="50" height="18" fill="#5f5a50" />
        <rect x="3" y="68" width="70" height="6" fill="#8ea06a" />
      </svg>
      <svg viewBox="0 0 66 86" className="ml-[4px] -mt-[8px] w-[66px] h-[86px] shrink-0">
        <path d="M2 18c4 6 58 6 62 0l-6 62c-2 6-48 6-50 0z" fill="#d7d9da" />
        <ellipse cx="33" cy="16" rx="31" ry="11" fill="#e4e6e6" stroke="#c2c4c4" />
        <path d="M14 18l8-14 8 12 8-14 8 12 8-6 4 14c-14 6-32 6-44-4z" fill="#8f9496" />
        <circle cx="28" cy="14" r="3" fill="#4a9b6c" />
        <circle cx="42" cy="16" r="3" fill="#c44a3e" />
      </svg>
    </div>
  );
}

export default function App() {
  return (
    <div className={`${ui} w-[2880px] h-[1800px] overflow-hidden bg-[#0a0e07] bg-[radial-gradient(ellipse_90px_30px_at_1730px_1672px,#5a4c20,transparent),radial-gradient(ellipse_90px_22px_at_1730px_1800px,#5a4c20,transparent),radial-gradient(ellipse_500px_60px_at_2500px_1800px,#26301a,transparent),radial-gradient(ellipse_600px_40px_at_1000px_1672px,#1d2413,transparent)]`}>
      <MenuBar />
      <div className="h-[1619px] rounded-[20px] overflow-hidden border-t-[2px] border-b-[3px] border-t-[#8a8a86] border-b-[#707072] flex flex-col relative">
        <TabStrip />
        <Toolbar />
        <BookmarksBar />
        <div className="flex-1 flex min-h-0 relative">
          <Sidebar />
          <main className="flex-1 bg-[#fdf7f7] flex flex-col min-w-0">
            <TopHeader />
            <div className="pl-[100px] pr-[110px] pt-[57px]">
              <h2 className="text-[60px] leading-[72px] font-semibold text-[#212529] tracking-[-0.3px] whitespace-nowrap">Manage All Virtual Transactions</h2>
              <Card />
            </div>
          </main>
          {/* Page scrollbar */}
          <div className="absolute right-0 top-0 w-[10px] h-[1208px] rounded-full bg-[#e08f90] z-20" />
          {/* Chat bubble */}
          <div className="absolute left-[2702px] top-[1212px] w-[120px] h-[120px] rounded-full bg-[#bd2623] flex items-center justify-center z-20">
            <svg viewBox="0 0 60 64" className="w-[58px] h-[62px]">
              <path d="M30 1c15 0 28 12 28 29 0 14-8 22-15 25L15 62l1-8C6 48 2 40 2 30 2 13 15 1 30 1z" fill="#fff" />
              <path d="M26 39h18c0 5-4 9-9 9s-9-4-9-9z" fill="#bd2623" />
            </svg>
          </div>
          {/* Window bottom shade */}
          <div className="absolute left-0 right-0 bottom-0 h-[56px] bg-gradient-to-b from-transparent to-black/10 pointer-events-none z-30" />
        </div>
      </div>
      <Dock />
    </div>
  );
}
